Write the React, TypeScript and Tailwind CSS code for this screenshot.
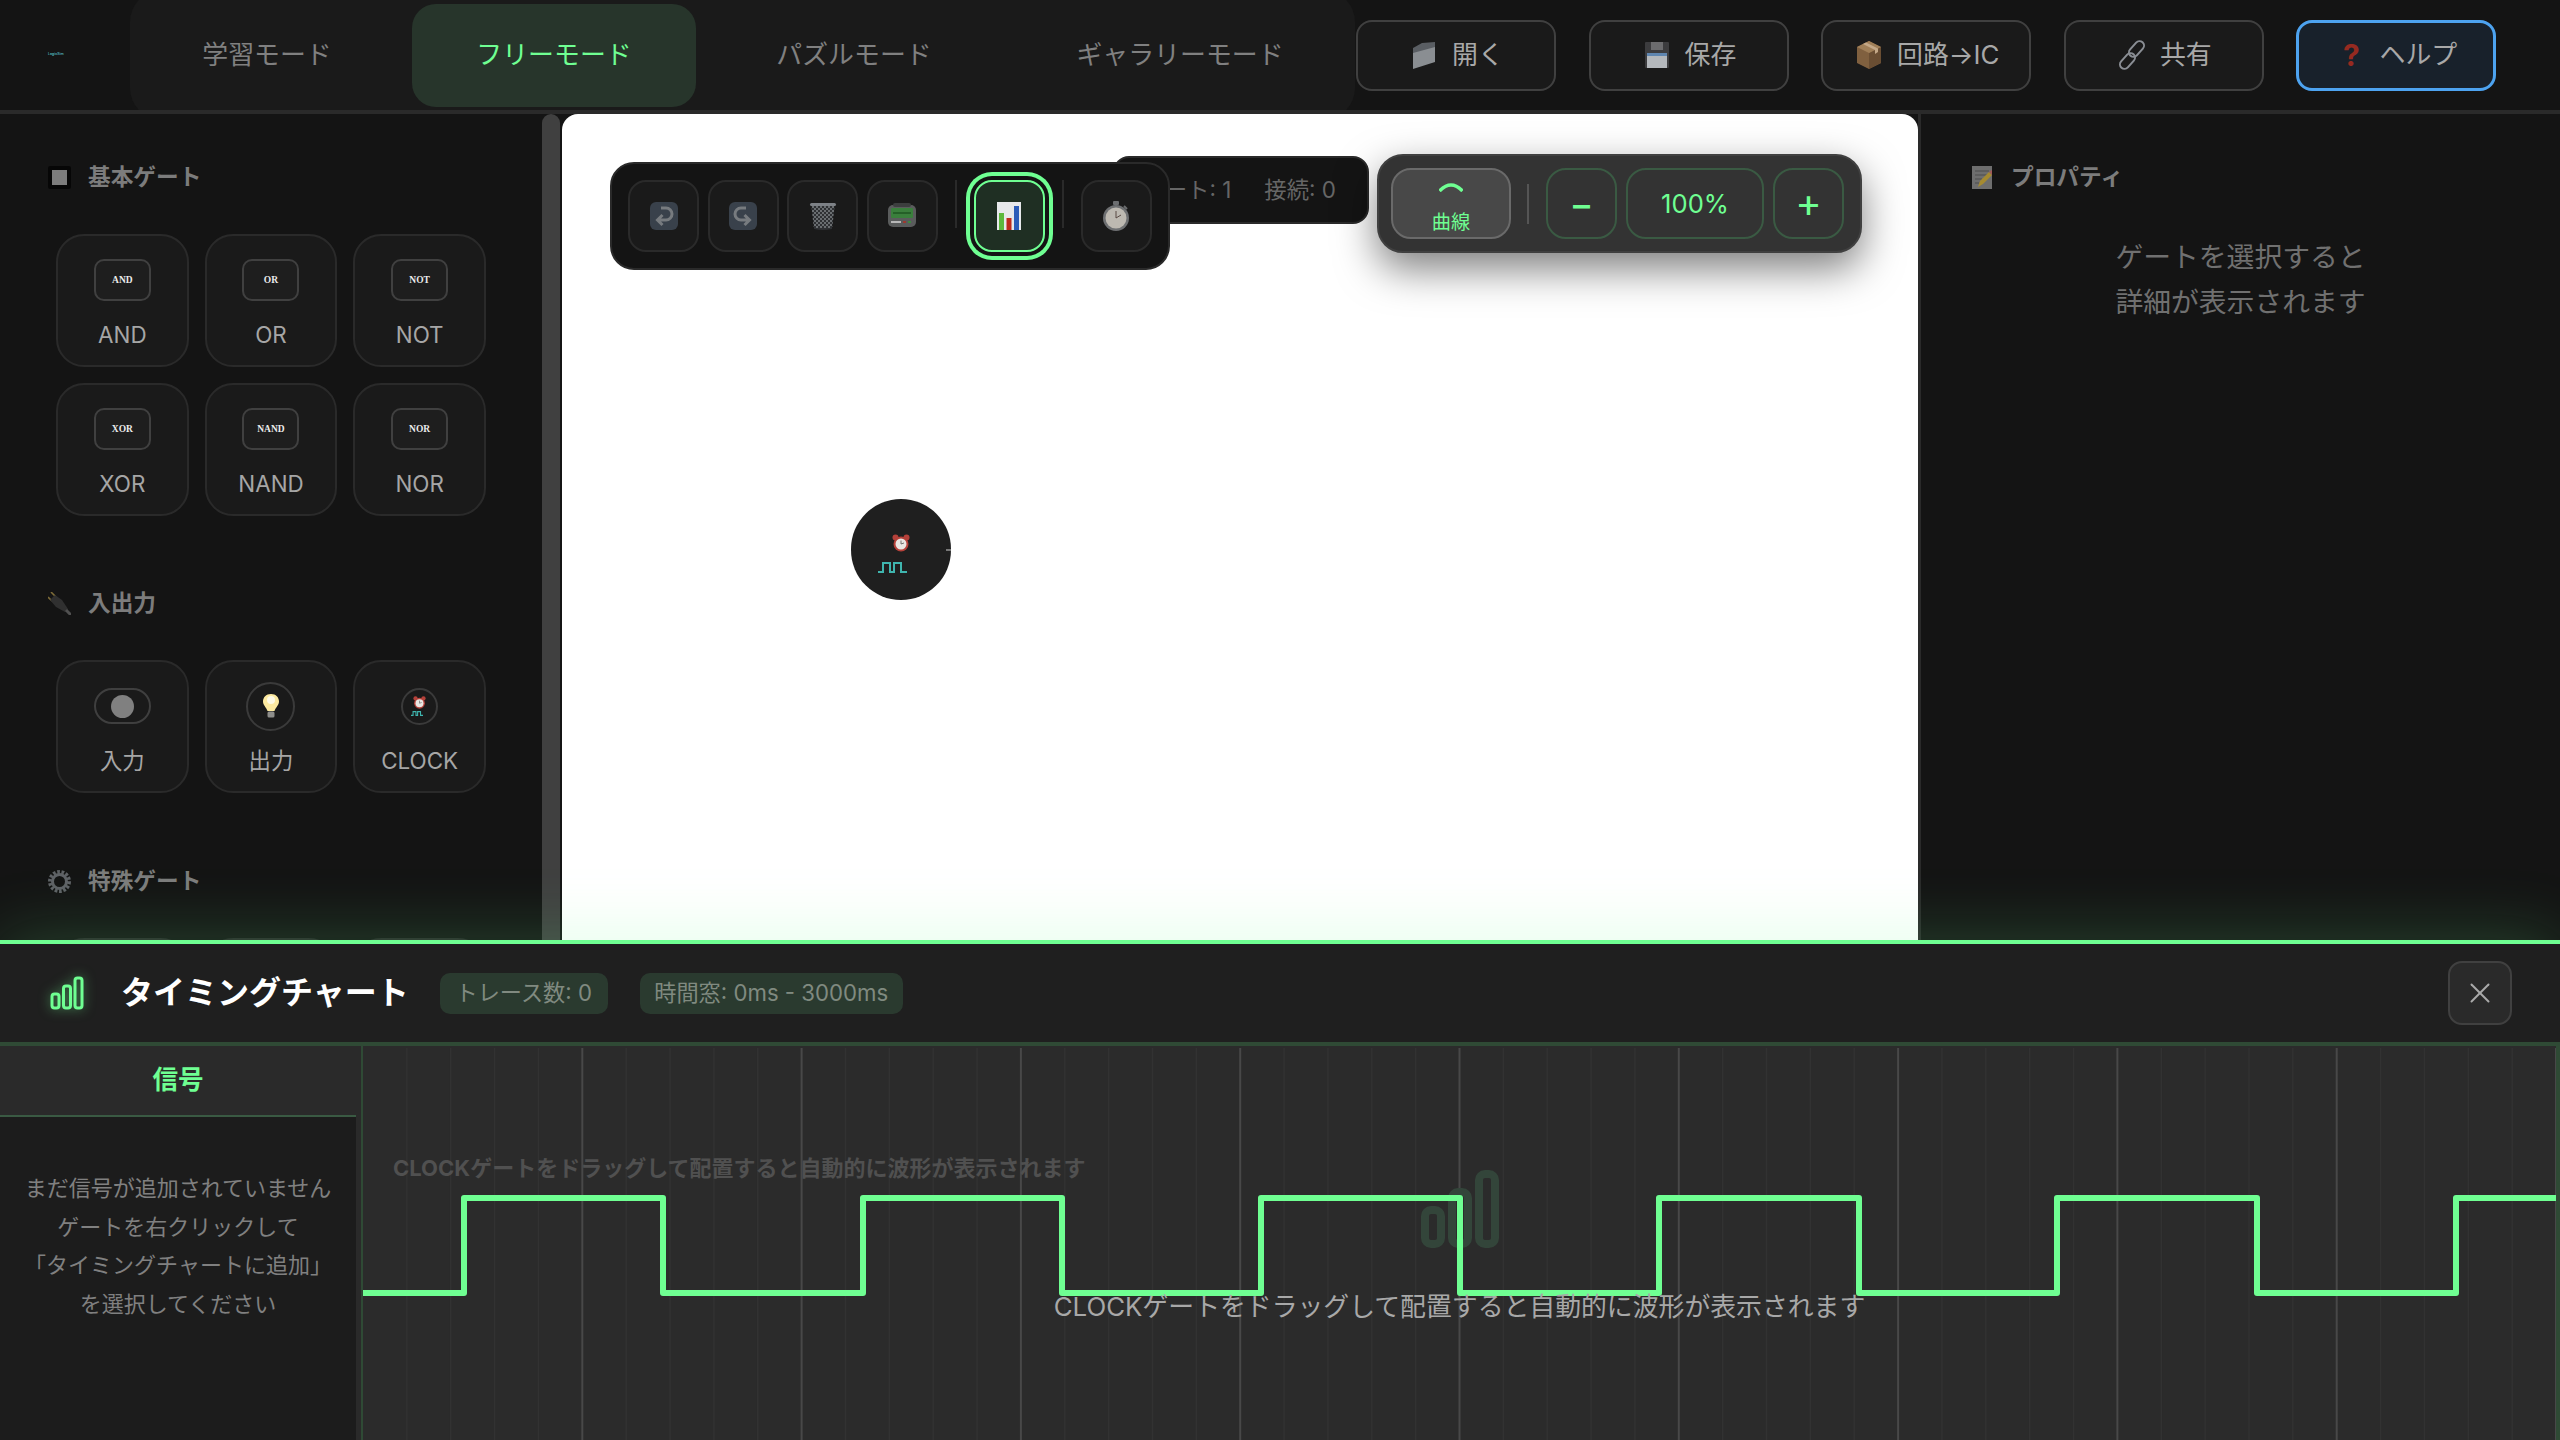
import { X } from 'lucide-react'
import type { ReactNode } from 'react'

const Folder = () => (
  <svg viewBox="0 0 32 32" className="w-[32px] h-[32px]">
    <path d="M5 9 L14 4 L27 3 V22 L5 29 Z" fill="#5a5e63" />
    <path d="M5 14 L27 8 V23 L5 30 Z" fill="#8a8e92" />
  </svg>
)
const Floppy = () => (
  <svg viewBox="0 0 32 32" className="w-[32px] h-[32px]">
    <rect x="4" y="3" width="24" height="26" rx="1" fill="#3c3c3e" />
    <rect x="10" y="3" width="12" height="8" fill="#6c6c6e" />
    <rect x="6" y="14" width="20" height="3" fill="#5f86b0" />
    <rect x="6" y="17" width="20" height="12" fill="#b4b8bc" />
  </svg>
)
const Box = () => (
  <svg viewBox="0 0 32 32" className="w-[32px] h-[32px]">
    <path d="M16 2 L28 8 V24 L16 30 L4 24 V8 Z" fill="#80603f" />
    <path d="M16 14 L28 8 V24 L16 30 Z" fill="#6a4e33" />
    <path d="M4 8 L16 2 L28 8 L16 14 Z" fill="#a07f58" />
    <path d="M10 5 L22 11 V15 L25 13 V9.5 L13 3.5 Z" fill="#c4a888" />
  </svg>
)
const Link = () => (
  <svg viewBox="0 0 32 32" className="w-[32px] h-[32px]" fill="none" stroke="#8a8e94" strokeWidth="2">
    <rect x="16" y="1" width="9" height="18" rx="4.5" transform="rotate(42 20.500 10)" />
    <rect x="7" y="13" width="9" height="18" rx="4.5" transform="rotate(42 11.500 22)" />
  </svg>
)
const KeyArrow = ({ flip }: { flip?: boolean }) => (
  <svg viewBox="0 0 28 28" className={flip ? 'w-[28px] h-[28px] -scale-x-100' : 'w-[28px] h-[28px]'}>
    <rect width="28" height="28" rx="6" fill="#39414b" />
    <path d="M11 6 H16 a6 6 0 0 1 0 12 H8 M12.500 13 L7.500 18 L12.500 23" fill="none" stroke="#777b7f" strokeWidth="3" />
  </svg>
)
const Trash = () => (
  <svg viewBox="0 0 28 28" className="w-[28px] h-[28px]">
    <path d="M2 3 H26 L23 27 Q14 29 5 27 Z" fill="#2f3134" />
    <g stroke="#7a7d81" strokeWidth="0.8">
      {[-16, -12, -8, -4, 0, 4, 8, 12, 16, 20].map((d) => (
        <g key={d}>
          <path d={`M${3 + d} 4 L${25 + d} 26`} />
          <path d={`M${25 - d} 4 L${3 - d} 26`} />
        </g>
      ))}
    </g>
    <path d="M0 4 H2.400 L5 28 H0 Z M28 4 H25.600 L23 28 H28 Z" fill="#1a1a1a" />
    <rect x="1" y="1" width="26" height="3" rx="1.5" fill="#7d8186" />
  </svg>
)
const Pager = () => (
  <svg viewBox="0 0 30 28" className="w-[30px] h-[28px]">
    <rect x="1" y="3" width="28" height="22" rx="5" fill="#5a5c5c" />
    <rect x="6" y="1" width="18" height="4" rx="2" fill="#3c3e3e" />
    <rect x="4" y="6" width="22" height="10" rx="1" fill="#3a7f3c" />
    <rect x="6" y="10" width="18" height="2" fill="#256028" />
    <rect x="4" y="19" width="10" height="2" fill="#b8b8b8" />
    <rect x="16" y="19" width="3" height="2" fill="#9c3a30" />
    <rect x="21" y="19" width="3" height="2" fill="#3e8a40" />
  </svg>
)
const ChartEmoji = () => (
  <svg viewBox="0 0 24 28" className="w-[24px] h-[28px]">
    <rect width="24" height="28" fill="#e6e8ea" />
    <rect x="2" y="11" width="5" height="17" fill="#5cb83c" />
    <rect x="9.5" y="16" width="5" height="12" fill="#bf2a1b" />
    <rect x="17" y="4" width="5" height="24" fill="#2b5cb8" />
  </svg>
)
const Stopwatch = () => (
  <svg viewBox="0 0 28 30" className="w-[28px] h-[32px]">
    <rect x="11" y="0" width="6" height="4" rx="1" fill="#6c6e70" />
    <path d="M22 5 L25 8" stroke="#6c6e70" strokeWidth="2" />
    <circle cx="14" cy="17" r="13" fill="#6e7072" />
    <circle cx="14" cy="17" r="10.500" fill="#bdb9b1" />
    <path d="M14 17 L14 10 M14 17 L19 14" stroke="#5a4a44" strokeWidth="1" />
  </svg>
)
const SquareEmoji = () => (
  <svg viewBox="0 0 23 23" className="w-[23px] h-[23px]">
    <rect width="23" height="23" rx="2" fill="#060606" />
    <rect x="4" y="4" width="15" height="15" fill="#7c7c7c" />
  </svg>
)
const Plug = () => (
  <svg viewBox="0 0 23 23" className="w-[23px] h-[23px]">
    <path d="M8 5 L3 0 M4 9 L0 5" stroke="#7e6c38" strokeWidth="1.6" />
    <path d="M7 3 L14 8 L20 17 L17 20 L8 15 L2 8 Z" fill="#303030" />
    <path d="M18 18 L23 23" stroke="#505050" strokeWidth="3" />
  </svg>
)
const Gear = () => (
  <svg viewBox="0 0 23 23" className="w-[23px] h-[23px]">
    <circle cx="11.5" cy="11.5" r="9" fill="none" stroke="#5f6266" strokeWidth="5" strokeDasharray="2.5 1.5" />
    <circle cx="11.5" cy="11.5" r="7" fill="none" stroke="#5f6266" strokeWidth="3" />
  </svg>
)
const Memo = () => (
  <svg viewBox="0 0 20 23" className="w-[20px] h-[23px]">
    <rect width="20" height="23" fill="#6e6e6e" />
    <path d="M3 5 H17 M3 9 H15 M3 13 H10 M3 17 H7" stroke="#4c4c4c" strokeWidth="1" />
    <path d="M6 21 L8 15 L17 6 L20 9 L11 18 Z" fill="#a58a30" />
    <path d="M17 6 L20 9 L20 4 Z" fill="#a05a58" />
  </svg>
)
const Bulb = () => (
  <svg viewBox="0 0 16 24" className="w-[16px] h-[24px]">
    <path d="M8 0 C3 0 0 3.500 0 7.500 C0 11 3 13 4.500 17 H11.500 C13 13 16 11 16 7.500 C16 3.500 13 0 8 0 Z" fill="#fdeaa0" />
    <circle cx="8" cy="6" r="4" fill="#fffbe6" />
    <rect x="4.500" y="17.500" width="7" height="6" rx="1.500" fill="#8d8d8a" />
  </svg>
)
const AlarmClock = ({ size }: { size: 'sm' | 'lg' }) => (
  <svg viewBox="0 0 18 18" className={size === 'sm' ? 'w-[13px] h-[13px]' : 'w-[18px] h-[18px]'}>
    <circle cx="3.500" cy="3.500" r="3" fill="#b5413a" />
    <circle cx="14.500" cy="3.500" r="3" fill="#b5413a" />
    <circle cx="9" cy="10" r="7.500" fill="#b5413a" />
    <circle cx="9" cy="10" r="5.500" fill="#e8e6e2" />
    <path d="M9 10 L9 6.500 M9 10 L12 9" stroke="#555" strokeWidth="0.8" />
  </svg>
)
const ClockWave = ({ size }: { size: 'sm' | 'lg' }) => (
  <svg
    viewBox="0 0 29 11"
    className={size === 'sm' ? 'w-[12px] h-[5px]' : 'w-[29px] h-[11px]'}
    fill="none"
    stroke="#3fb5ae"
    strokeWidth={size === 'sm' ? 2.6 : 2}
  >
    <path d="M0 10 H5 V1 H12 V10 H16 V1 H23 V10 H29" />
  </svg>
)

const HeadBtn = ({ icon, label, help }: { icon: ReactNode; label: string; help?: boolean }) => (
  <button
    className={
      help
        ? 'min-w-[200px] h-[71px] px-[30px] flex items-center justify-center gap-[12px] rounded-[16px] border-[3px] border-[#4da3f0] bg-[#18212b] text-[25.9px] text-[#a8a8a8]'
        : 'min-w-[200px] h-[71px] px-[30px] flex items-center justify-center gap-[12px] rounded-[16px] border-2 border-[#404040] bg-[#1a1a1a] text-[25.9px] text-[#a8a8a8]'
    }
  >
    {icon}
    <span>{label}</span>
  </button>
)

const Heading = ({ icon, title }: { icon: ReactNode; title: string }) => (
  <div className="flex items-center gap-[17px] h-[32px] ml-[48px] mb-[41px] text-[22.7px] font-semibold text-[#7c7c7c]">
    <span className="w-[23px] flex justify-center">{icon}</span>
    {title}
  </div>
)

const GateCard = ({ icon, label }: { icon: ReactNode; label: string }) => (
  <div className="h-[133px] rounded-[28px] border-2 border-[#2a2a2a] bg-[#1a1a1a] pt-[19px] flex flex-col items-center">
    <div className="h-[50px] flex items-center justify-center">{icon}</div>
    <div className="mt-[16px] text-[22.4px] leading-[28px] text-[#a6a6a6]">{label}</div>
  </div>
)

const GateBox = ({ name }: { name: string }) => (
  <div className="w-[57px] h-[42px] rounded-[10px] border-2 border-[#404040] bg-[#1e1e1e] flex items-center justify-center font-['Liberation_Serif',serif] font-bold text-[9.500px] text-[#ececec]">
    {name}
  </div>
)

const Sidebar = () => (
  <aside className="w-[542px] shrink-0 bg-[#141414] pt-[47px] overflow-hidden">
    <Heading icon={<SquareEmoji />} title="基本ゲート" />
    <div className="ml-[56px] w-[430px] grid grid-cols-3 gap-x-[16px] gap-y-[16px] mt-[1px] mb-[71px]">
      {['AND', 'OR', 'NOT', 'XOR', 'NAND', 'NOR'].map((g) => (
        <GateCard key={g} label={g} icon={<GateBox name={g} />} />
      ))}
    </div>
    <Heading icon={<Plug />} title="入出力" />
    <div className="ml-[56px] w-[430px] grid grid-cols-3 gap-x-[16px] mb-[72px]">
      <GateCard
        label="入力"
        icon={
          <div className="w-[57px] h-[36px] rounded-full border-2 border-[#3f3f3f] flex items-center justify-center">
            <div className="w-[23px] h-[23px] rounded-full bg-[#808080]" />
          </div>
        }
      />
      <GateCard
        label="出力"
        icon={
          <div className="w-[49px] h-[49px] rounded-full border-2 border-[#3a3a3a] flex items-center justify-center">
            <Bulb />
          </div>
        }
      />
      <GateCard
        label="CLOCK"
        icon={
          <div className="w-[37px] h-[37px] rounded-full border-2 border-[#3a3a3a] flex flex-col items-center justify-center">
            <AlarmClock size="sm" />
            <div className="mt-[2px] -ml-[5px] flex"><ClockWave size="sm" /></div>
          </div>
        }
      />
    </div>
    <Heading icon={<Gear />} title="特殊ゲート" />
    {/* only the top edge of this row shows above the timing panel */}
    <div className="ml-[56px] w-[430px] grid grid-cols-3 gap-x-[16px]">
      <div className="h-[133px] rounded-[28px] border-2 border-[#2a2a2a] bg-[#1a1a1a]" />
      <div className="h-[133px] rounded-[28px] border-2 border-[#2a2a2a] bg-[#1a1a1a]" />
      <div className="h-[133px] rounded-[28px] border-2 border-[#2a2a2a] bg-[#1a1a1a]" />
    </div>
  </aside>
)

const ToolBtn = ({ children }: { children: ReactNode }) => (
  <button className="w-[71px] h-[72px] rounded-[18px] border-2 border-[#2a2a2a] bg-[#1a1a1a] flex items-center justify-center">
    {children}
  </button>
)

const Canvas = () => (
  <div className="relative w-[1356px] shrink-0 bg-white rounded-t-[16px] overflow-hidden">
    {/* stats sit behind the toolbar */}
    <div className="absolute left-[551px] top-[42px] w-[256px] h-[68px] rounded-[16px] bg-[#141414] border-2 border-[#2a2a2a] flex items-center justify-end gap-[33px] pr-[31px] text-[22.4px] text-[#666666] whitespace-nowrap">
      <span>ゲート: 1</span>
      <span>接続: 0</span>
    </div>

    <div className="absolute left-[48px] top-[48px] w-[560px] h-[108px] rounded-[24px] bg-[#141414] border-2 border-[#2a2a2a] pl-[16px] pt-[16px] flex items-start">
      <div className="flex gap-[8.500px]">
        <ToolBtn><KeyArrow /></ToolBtn>
        <ToolBtn><KeyArrow flip /></ToolBtn>
        <ToolBtn><Trash /></ToolBtn>
        <ToolBtn><Pager /></ToolBtn>
      </div>
      <div className="w-[2px] h-[48px] bg-[#2a2a2a] mx-[17px]" />
      <button className="w-[71px] h-[72px] rounded-[18px] border-2 border-[#6fff92] bg-[#1f2f23] flex items-center justify-center shadow-[0_0_0_4px_#141414,0_0_0_8px_#6fff92]">
        <ChartEmoji />
      </button>
      <div className="w-[2px] h-[48px] bg-[#2a2a2a] mx-[17px]" />
      <ToolBtn><Stopwatch /></ToolBtn>
    </div>

    <div className="absolute left-[815px] top-[40px] w-[485px] h-[99px] rounded-[26px] bg-[#333333] border-2 border-[#404040] pl-[12px] flex items-center shadow-[0_16px_40px_rgba(0,0,0,0.5)] text-[#6fff92]">
      <button className="w-[120px] h-[71px] rounded-[20px] border-2 border-[#6a6a6a] bg-[#484848] flex flex-col items-center">
        <svg viewBox="0 0 24 10" className="w-[24px] h-[10px] mt-[12px]" fill="none" stroke="#6fff92" strokeWidth="3.500">
          <path d="M0.500 9 Q12 -3 23.500 9" />
        </svg>
        <span className="text-[19.2px] leading-[24px] mt-[18px]">曲線</span>
      </button>
      <div className="w-[2px] h-[40px] bg-[#555555] ml-[16px] mr-[17px]" />
      <button className="w-[71px] h-[71px] rounded-[20px] border-2 border-[#3a5a43] text-[36px] font-medium">−</button>
      <button className="w-[138px] h-[71px] ml-[9px] pt-[2px] rounded-[20px] border-2 border-[#3a5a43] text-[25.6px]">100%</button>
      <button className="w-[71px] h-[71px] ml-[9px] pb-[2px] rounded-[20px] border-2 border-[#3a5a43] text-[40px]">+</button>
    </div>

    <div className="absolute left-[289px] top-[385px] w-[100px] h-[101px] rounded-full bg-[#1f1f1f] flex flex-col items-center pt-[35px]">
      <AlarmClock size="lg" />
      <div className="mt-[10px] -ml-[17px] flex"><ClockWave size="lg" /></div>
      <div className="absolute right-0 top-[50px] w-[5px] h-[2px] bg-[#777777]" />
    </div>
  </div>
)

const PropertyPanel = () => (
  <aside className="flex-1 bg-[#141414] border-l-[3px] border-[#2a2a2a] pt-[47px]">
    <div className="flex items-center gap-[19px] h-[32px] ml-[51px] text-[22.7px] font-semibold text-[#7c7c7c]">
      <Memo />
      プロパティ
    </div>
    <p className="mt-[42px] text-center text-[27.8px] leading-[45px] text-[#707070]">
      ゲートを選択すると
      <br />
      詳細が表示されます
    </p>
  </aside>
)

// grid every 43.86px, every fifth line brighter
const GRID = Array.from({ length: 50 }, (_, i) => i + 1)
const WAVE =
  'M0 247 H101 V152 H300 V247 H500 V152 H699 V247 H898 V152 H1097 V247 H1296 V152 H1496 V247 H1694 V152 H1894 V247 H2093 V152 H2197'

const ChartArea = () => (
  <div className="relative flex-1 bg-[#2b2b2b] border-l-2 border-r-[4px] border-[#2f4a35] overflow-hidden">
    <svg className="w-full h-full block">
      {GRID.map((i) => (
        <line
          key={i}
          x1={i * 43.86}
          x2={i * 43.86}
          y1="2"
          y2="394"
          stroke={i % 5 === 0 ? '#484848' : '#323232'}
          strokeWidth={i % 5 === 0 ? 2 : 1.500}
        />
      ))}
      <g fill="none" stroke="#33453a" strokeWidth="8">
        <rect x="1062" y="164" width="16" height="34" rx="6" />
        <rect x="1089" y="146" width="16" height="52" rx="6" />
        <rect x="1116" y="128" width="16" height="70" rx="6" />
      </g>
      <path d={WAVE} fill="none" stroke="#6fff92" strokeWidth="6" strokeLinejoin="round" />
    </svg>
    <div className="absolute left-[30px] top-[106px] text-[22px] leading-[32px] font-bold text-[#505050] whitespace-nowrap">
      CLOCKゲートをドラッグして配置すると自動的に波形が表示されます
    </div>
    <div className="absolute left-0 right-0 top-[243px] text-center text-[25.85px] leading-[36px] text-[#a8a8a8] whitespace-nowrap">
      CLOCKゲートをドラッグして配置すると自動的に波形が表示されます
    </div>
  </div>
)

const TimingPanel = () => (
  <section className="relative z-10 h-[500px] shrink-0 flex flex-col bg-[#1f1f1f] border-t-[4px] border-[#6fff92] shadow-[0_-4px_64px_rgba(111,255,146,0.2)]">
    <div className="h-[102px] shrink-0 border-b-[4px] border-[#2f4a35] flex items-center pl-[50px] pr-[48px]">
      <svg viewBox="0 0 34 34" className="w-[34px] h-[34px] drop-shadow-[0_0_6px_rgba(111,255,146,0.5)]" fill="none" stroke="#6fff92" strokeWidth="3">
        <rect x="2" y="18" width="7" height="14" rx="2.500" />
        <rect x="13.500" y="10" width="7" height="22" rx="2.500" />
        <rect x="25" y="2" width="7" height="30" rx="2.500" />
      </svg>
      <h2 className="ml-[37px] text-[32px] font-bold text-white whitespace-nowrap">タイミングチャート</h2>
      <span className="ml-[31px] w-[168px] h-[41px] rounded-[10px] bg-[#2a3a2f] flex items-center justify-center text-[22.2px] text-[#808a80]">
        トレース数: 0
      </span>
      <span className="ml-[32px] w-[263px] h-[41px] rounded-[10px] bg-[#2a3a2f] flex items-center justify-center text-[22.2px] text-[#808a80]">
        時間窓: 0ms - 3000ms
      </span>
      <button className="ml-auto w-[64px] h-[64px] rounded-[14px] bg-[#2a2a2a] border-2 border-[#404040] flex items-center justify-center text-[#aaaaaa]">
        <X size={34} strokeWidth={1.4} />
      </button>
    </div>
    <div className="flex-1 min-h-0 flex">
      <div className="w-[356px] shrink-0 bg-[#1c1c1c] flex flex-col">
        <div className="h-[71px] shrink-0 bg-[#2a2a2a] border-b-2 border-[#3a5a43] flex items-center justify-center text-[25.6px] font-semibold text-[#6fff92]">
          信号
        </div>
        <p className="pt-[52px] text-center text-[22px] leading-[38.700px] text-[#808080] whitespace-nowrap">
          まだ信号が追加されていません
          <br />
          ゲートを右クリックして
          <br />
          「タイミングチャートに追加」
          <br />
          を選択してください
        </p>
      </div>
      <div className="w-[5px] shrink-0 bg-[#2a2a2a]" />
      <ChartArea />
    </div>
  </section>
)

export default function App() {
  return (
    <div className="w-[2560px] h-[1440px] overflow-hidden flex flex-col bg-[#141414] font-['Inter','Noto_Sans_CJK_JP',sans-serif]">
      <header className="h-[114px] shrink-0 bg-[#141414] border-b-[4px] border-[#2a2a2a] flex items-center overflow-hidden">
        <span className="w-[130px] pl-[48px] text-[3.500px] text-[#4fb0b8] font-semibold">LogicSim</span>
        <nav className="w-[1225px] h-[130px] rounded-[32px] bg-[#1a1a1a] flex items-center text-[25.9px] text-[#808080]">
          <button className="w-[274px] text-center">学習モード</button>
          <button className="ml-[8px] w-[284px] h-[103px] rounded-[24px] bg-[#27352b] text-[#6fff92]">フリーモード</button>
          <button className="ml-[4px] w-[308px] text-center">パズルモード</button>
          <button className="ml-[5px] w-[334px] text-center whitespace-nowrap">ギャラリーモード</button>
        </nav>
        <div className="ml-[1px] flex items-center gap-[32.500px]">
          <HeadBtn icon={<Folder />} label="開く" />
          <HeadBtn icon={<Floppy />} label="保存" />
          <HeadBtn icon={<Box />} label="回路→IC" />
          <HeadBtn icon={<Link />} label="共有" />
          <HeadBtn icon={<span className="w-[32px] text-center text-[30px] font-bold text-[#962a20]">?</span>} label="ヘルプ" help />
        </div>
      </header>
      <main className="flex-1 min-h-0 flex">
        <Sidebar />
        <div className="w-[18px] shrink-0 bg-[#404040] rounded-t-full" />
        <div className="w-[2px] shrink-0" />
        <Canvas />
        <PropertyPanel />
      </main>
      <TimingPanel />
    </div>
  )
}
